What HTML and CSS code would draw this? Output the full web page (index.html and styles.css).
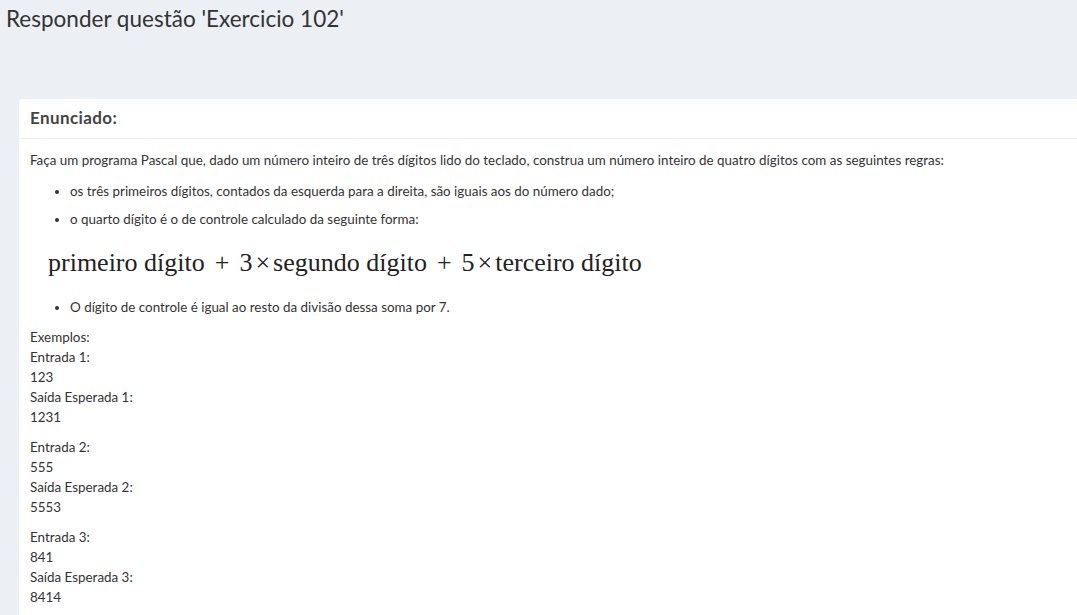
FILE: index.html
```html
<!DOCTYPE html>
<html lang="pt">
<head>
<meta charset="utf-8">
<title>Responder questão</title>
<link rel="stylesheet" href="styles.css">
</head>
<body>
<h1 class="page-title">Responder questão 'Exercicio 102'</h1>
<section class="card">
  <div class="card-header">Enunciado:</div>
  <div class="card-body">
    <p class="intro">Faça um programa Pascal que, dado um número inteiro de três dígitos lido do teclado, construa um número inteiro de quatro dígitos com as seguintes regras:</p>
    <ul class="rules">
      <li>os três primeiros dígitos, contados da esquerda para a direita, são iguais aos do número dado;</li>
      <li>o quarto dígito é o de controle calculado da seguinte forma:</li>
    </ul>
    <div class="math">primeiro dígito<span class="op">+</span>3<span class="times">×</span>segundo dígito<span class="op">+</span>5<span class="times">×</span>terceiro dígito</div>
    <ul class="rules last">
      <li>O dígito de controle é igual ao resto da divisão dessa soma por 7.</li>
    </ul>
    <p class="example">Exemplos:<br>Entrada 1:<br>123<br>Saída Esperada 1:<br>1231</p>
    <p class="example">Entrada 2:<br>555<br>Saída Esperada 2:<br>5553</p>
    <p class="example">Entrada 3:<br>841<br>Saída Esperada 3:<br>8414</p>
  </div>
</section>
</body>
</html>
```
FILE: styles.css
```css
html, body {
  margin: 0;
  padding: 0;
  background: #ecf0f5;
  font-family: Lato, "Noto Sans", sans-serif;
  color: #333;
  overflow: hidden;
}
.page-title {
  margin: 0;
  padding: 4px 0 0 6px;
  font-weight: 400;
  font-size: 22.5px;
  line-height: 30px;
  color: #333;
}
.card {
  margin: 65px 0 0 19px;
  background: #fff;
  border-radius: 3px 0 0 0;
}
.card-header {
  padding: 8px 11px 9px;
  font-size: 17px;
  font-weight: 700;
  letter-spacing: 0.4px;
  line-height: 22px;
  color: #444;
  border-bottom: 1px solid #f0f0f0;
}
.card-body {
  padding: 11px 11px 10px;
  font-size: 13.4px;
  line-height: 20px;
}
.card-body p {
  margin: 0 0 10px;
}
.intro {
  margin-bottom: 11px !important;
}
.rules {
  margin: 0;
  padding-left: 40px;
}
.rules li {
  margin-bottom: 8px;
}
.rules.last li {
  margin-bottom: 10px;
}
.math {
  font-family: "Liberation Serif", "DejaVu Serif", serif;
  font-size: 26px;
  line-height: 32px;
  padding: 10px 0 18px 18px;
  color: #222;
}
.math .op {
  margin: 0 10px;
}
.math .times {
  margin: 0 3px;
}
.example {
  color: #333;
}
```
